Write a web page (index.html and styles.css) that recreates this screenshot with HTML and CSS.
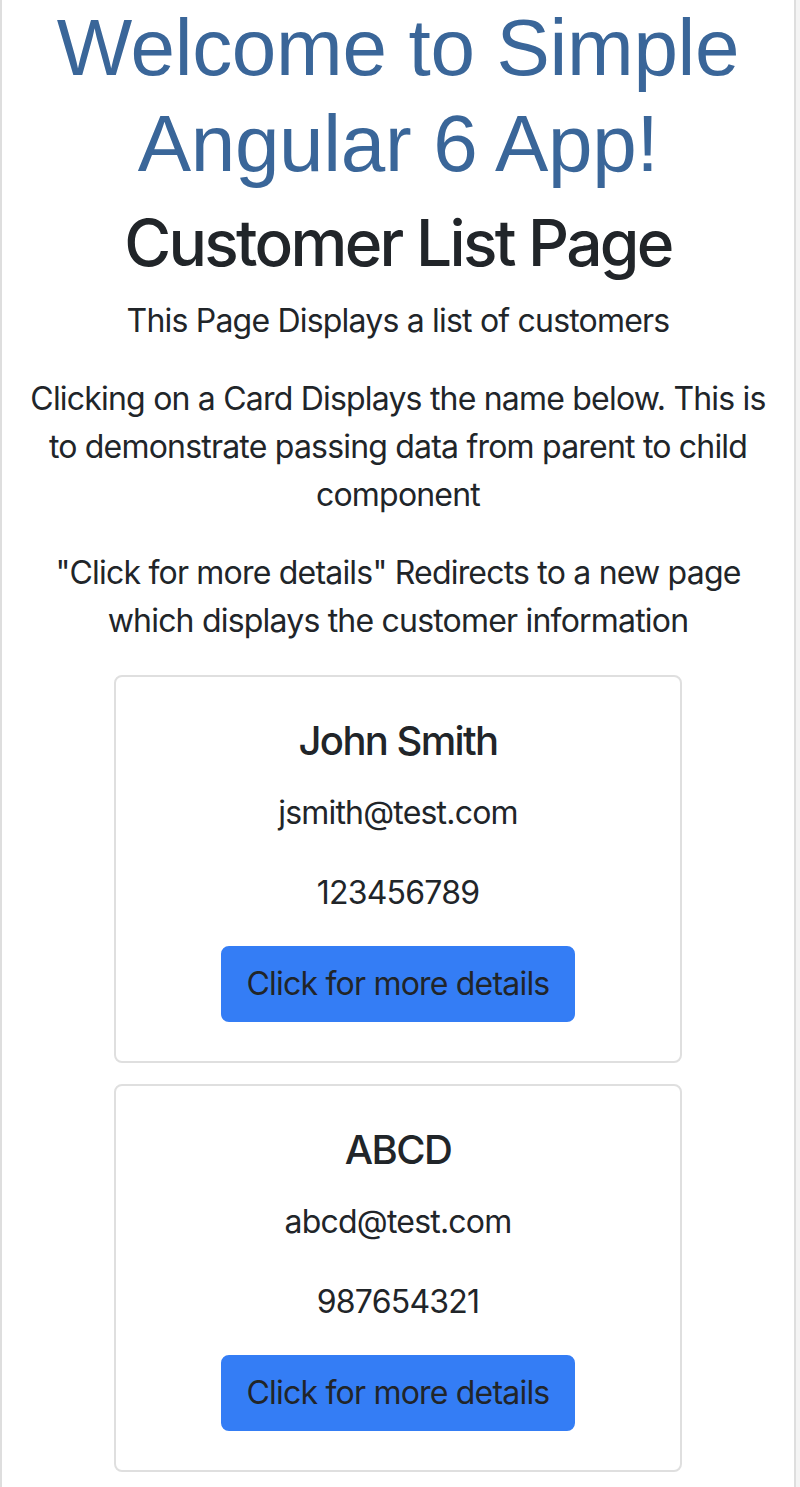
FILE: index.html
```html
<!DOCTYPE html>
<html lang="en">
<head>
    <meta charset="UTF-8">
    <meta name="viewport" content="width=device-width, initial-scale=1.0">
    <title>Simple Angular 6 App</title>
    <link rel="stylesheet" href="styles.css">
</head>
<body>
    <div class="page">
        <h1 class="app-title">Welcome to Simple Angular 6 App!</h1>

        <div class="customer-list">
            <h2>Customer List Page</h2>
            <p>This Page Displays a list of customers</p>
            <p>Clicking on a Card Displays the name below. This is to demonstrate passing data from parent to child component</p>
            <p>"Click for more details" Redirects to a new page which displays the customer information</p>

            <div class="card">
                <div class="card-body">
                    <h5 class="card-title">John Smith</h5>
                    <p class="card-text">jsmith@test.com</p>
                    <p class="card-text last">123456789</p>
                    <button class="btn btn-primary">Click for more details</button>
                </div>
            </div>

            <div class="card">
                <div class="card-body">
                    <h5 class="card-title">ABCD</h5>
                    <p class="card-text">abcd@test.com</p>
                    <p class="card-text last">987654321</p>
                    <button class="btn btn-primary">Click for more details</button>
                </div>
            </div>
        </div>
    </div>
</body>
</html>
```

FILE: styles.css
```css
html {
    background: #f4f4f4;
}

body {
    margin: 0;
    width: 796px;
    min-height: 1487px;
    background: white;
    font-family: Inter, 'Noto Sans', sans-serif;
    font-size: 32px;
    line-height: 1.5;
    letter-spacing: -0.8px;
    color: #212529;
    text-align: center;
}

.page {
    min-height: 1487px;
    border-left: 2px solid #dedede;
    border-right: 2px solid #dedede;
}

.app-title {
    color: #3a6699;
    font-family: 'Liberation Sans', Arial, sans-serif;
    font-size: 80px;
    font-weight: 400;
    line-height: 1.2;
    letter-spacing: -0.3px;
    margin: 0 0 13px 0;
}

.customer-list h2 {
    font-size: 64px;
    font-weight: 500;
    line-height: 1.2;
    letter-spacing: -2.7px;
    margin: 0 0 15px 0;
}

.customer-list p {
    margin: 0 0 30px 0;
    padding: 0 24px;
}

.card {
    width: 568px;
    margin: 0 auto 21px;
    box-sizing: border-box;
    border: 2px solid #dfdfdf;
    border-radius: 8px;
    background: white;
}

.card-body {
    padding: 40px 40px 39px;
}

.card-title {
    font-size: 40px;
    font-weight: 500;
    line-height: 1.2;
    letter-spacing: -1.6px;
    margin: 0 0 24px 0;
}

.customer-list .card-text {
    padding: 0;
    margin: 0 0 32px 0;
}

.customer-list .card-text.last {
    margin-bottom: 29px;
}

.btn {
    font-family: inherit;
    font-size: 32px;
    line-height: 1.5;
    letter-spacing: -0.8px;
    color: #212529;
    background: #347df5;
    border: 2px solid #347df5;
    border-radius: 8px;
    padding: 12px 24px;
    cursor: pointer;
}
```
